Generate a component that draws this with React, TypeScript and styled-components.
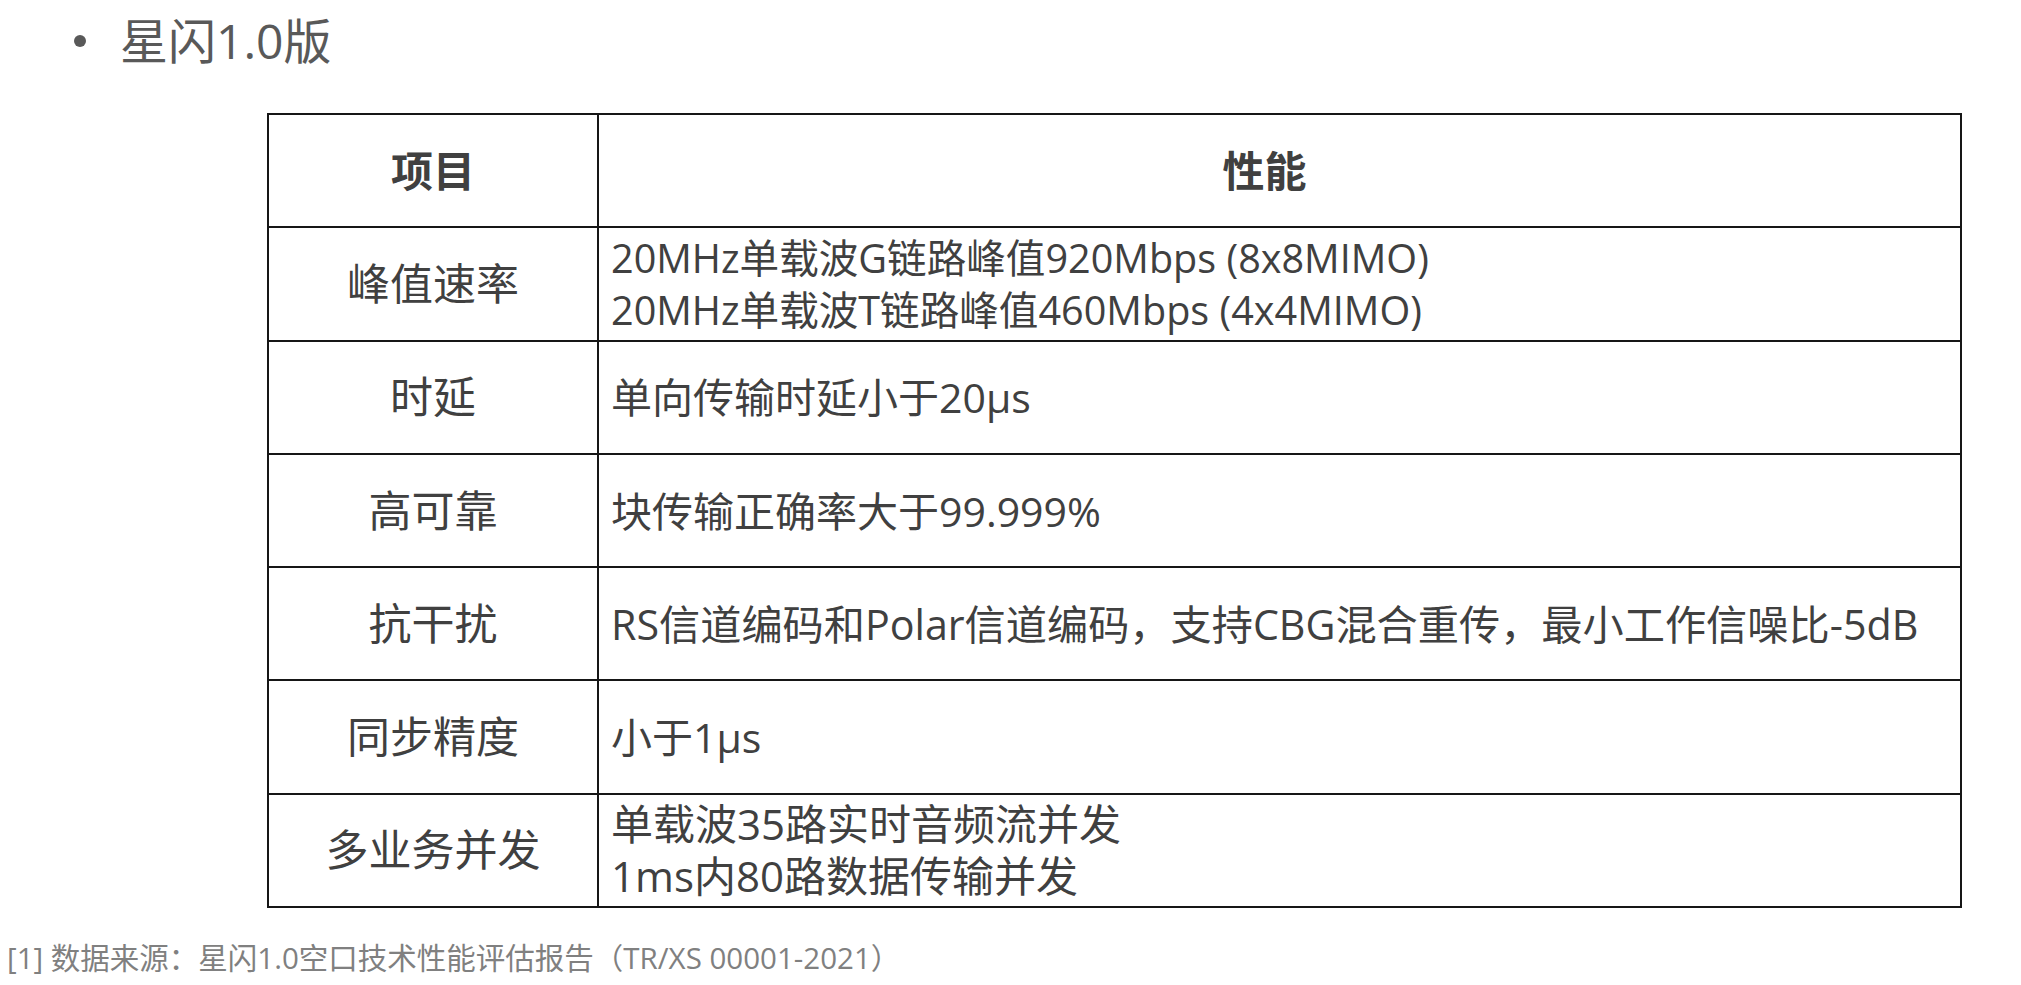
import React from "react";
import styled, { createGlobalStyle } from "styled-components";

const GlobalStyle = createGlobalStyle`
  html, body {
    margin: 0;
    padding: 0;
    background: #ffffff;
  }
  body {
    font-family: "Open Sans", "Noto Sans CJK SC", sans-serif;
    color: #404040;
  }
`;

const Page = styled.div`
  width: 2021px;
  min-height: 985px;
  display: flex;
  flex-direction: column;
`;

const Heading = styled.div`
  height: 82px;
  display: flex;
  align-items: center;
  padding-left: 74px;
  gap: 34px;
`;

const Bullet = styled.span`
  width: 12px;
  height: 12px;
  border-radius: 50%;
  background: #595959;
  flex: none;
`;

const HeadingText = styled.span`
  font-size: 48px;
  line-height: 1;
  color: #595959;
  font-family: "Open Sans", "Noto Sans CJK SC", sans-serif;
`;

const TableWrap = styled.div`
  margin-top: 31px;
  padding-left: 267px;
`;

const Table = styled.table`
  width: 1695px;
  border-collapse: collapse;
  table-layout: fixed;
  border: 2px solid #161616;
`;

const Row = styled.tr`
  height: 113.3px;
`;

const Cell = styled.td<{ $align?: "left" | "center"; $size?: number; $bold?: boolean; $padRight?: number }>`
  border: 2px solid #161616;
  padding: 0 ${(p) => p.$padRight ?? 0}px 0 ${(p) => (p.$align === "left" ? 12 : 0)}px;
  text-align: ${(p) => p.$align ?? "center"};
  vertical-align: middle;
  font-size: ${(p) => p.$size ?? 41}px;
  font-weight: ${(p) => (p.$bold ? 700 : 400)};
  line-height: 52px;
  color: #404040;
  white-space: nowrap;
`;

const Footnote = styled.div`
  margin-top: 32px;
  padding-left: 7px;
  font-size: 29.5px;
  line-height: 36px;
  color: #808080;
`;

type Item = { name: string; lines: string[]; size?: number };

const rows: Item[] = [
  {
    name: "峰值速率",
    lines: [
      "20MHz单载波G链路峰值920Mbps (8x8MIMO)",
      "20MHz单载波T链路峰值460Mbps (4x4MIMO)",
    ],
    size: 39.6,
  },
  { name: "时延", lines: ["单向传输时延小于20μs"] },
  { name: "高可靠", lines: ["块传输正确率大于99.999%"] },
  {
    name: "抗干扰",
    lines: ["RS信道编码和Polar信道编码，支持CBG混合重传，最小工作信噪比-5dB"],
    size: 41.2,
  },
  { name: "同步精度", lines: ["小于1μs"] },
  {
    name: "多业务并发",
    lines: ["单载波35路实时音频流并发", "1ms内80路数据传输并发"],
    size: 42,
  },
];

export default function App() {
  return (
    <Page>
      <GlobalStyle />
      <Heading>
        <Bullet />
        <HeadingText>星闪1.0版</HeadingText>
      </Heading>
      <TableWrap>
        <Table>
          <colgroup>
            <col style={{ width: "330px" }} />
            <col />
          </colgroup>
          <tbody>
            <Row>
              <Cell $bold $size={42}>项目</Cell>
              <Cell $bold $size={42} $padRight={30}>性能</Cell>
            </Row>
            {rows.map((r) => (
              <Row key={r.name}>
                <Cell $size={43}>{r.name}</Cell>
                <Cell $align="left" $size={r.size}>
                  {r.lines.map((l, i) => (
                    <React.Fragment key={i}>
                      {i > 0 && <br />}
                      {l}
                    </React.Fragment>
                  ))}
                </Cell>
              </Row>
            ))}
          </tbody>
        </Table>
      </TableWrap>
      <Footnote>[1] 数据来源：星闪1.0空口技术性能评估报告（TR/XS 00001-2021）</Footnote>
    </Page>
  );
}
